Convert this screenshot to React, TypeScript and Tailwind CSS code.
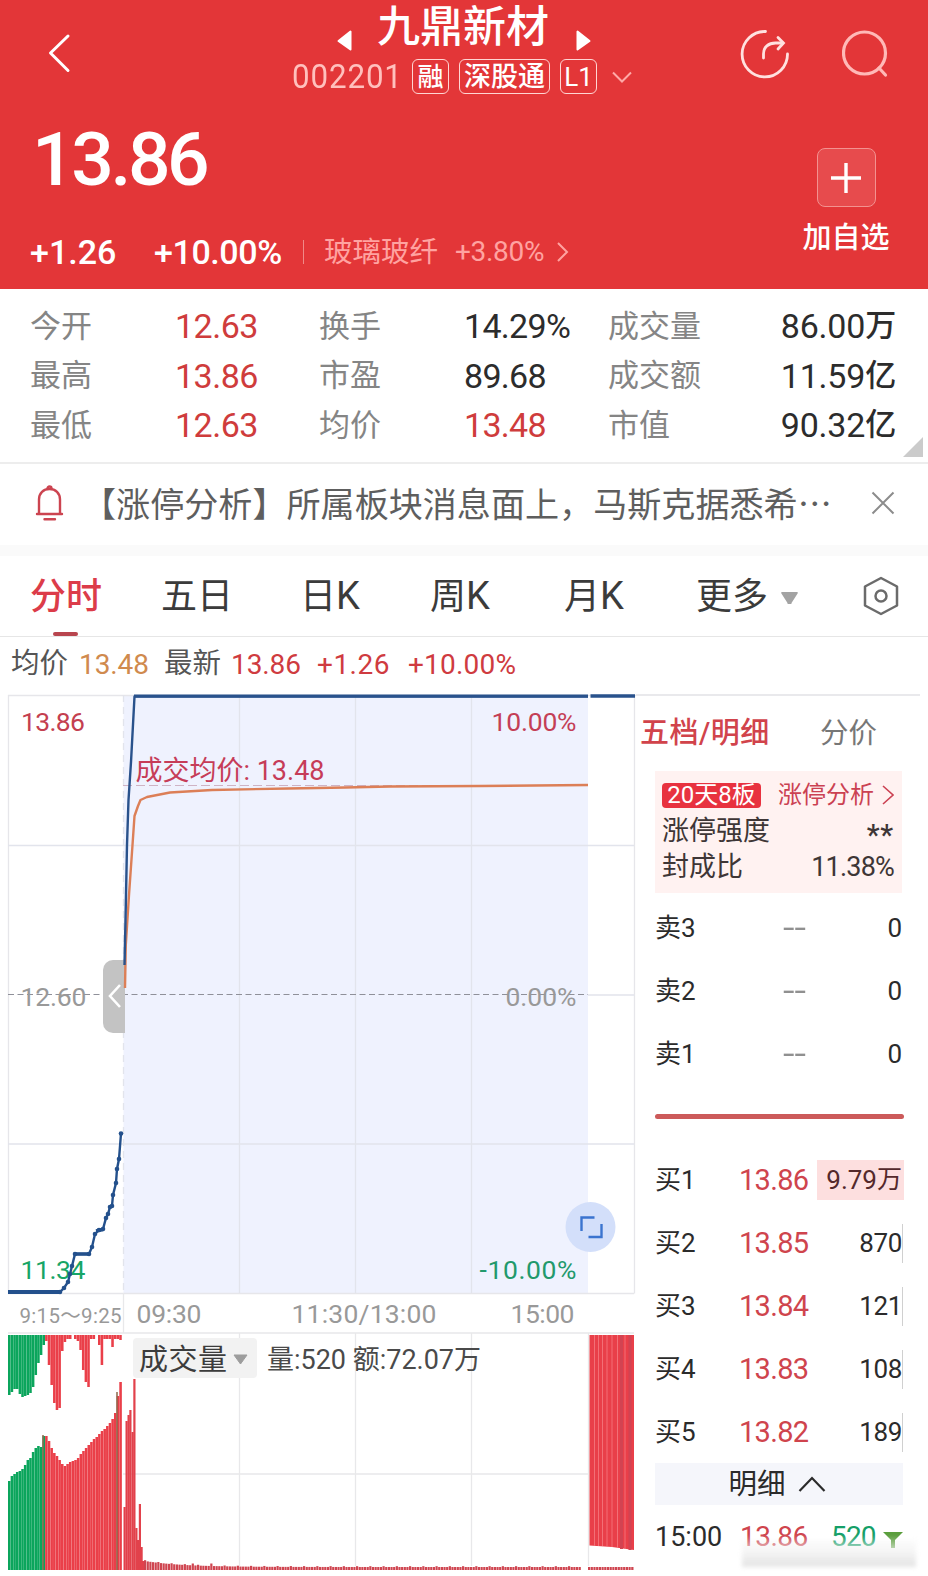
import React from "react";

const FONT = "font-['Roboto','Noto_Sans_CJK_SC',sans-serif]";

const stats = [
  ["今开", "12.63", "", "换手", "14.29%", "成交量", "86.00", "万"],
  ["最高", "13.86", "", "市盈", "89.68", "成交额", "11.59", "亿"],
  ["最低", "12.63", "", "均价", "13.48", "市值", "90.32", "亿"],
];

const sells = ["卖3", "卖2", "卖1"];

const buys = [
  { label: "买1", price: "13.86", volume: "9.79", unit: "万" },
  { label: "买2", price: "13.85", volume: "870" },
  { label: "买3", price: "13.84", volume: "121" },
  { label: "买4", price: "13.83", volume: "108" },
  { label: "买5", price: "13.82", volume: "189" },
];

type Point = [number, number];

// auction matching price, 9:15 - 9:25
const auction: Point[] = [
  [60, 1292], [64, 1288], [68, 1282], [70, 1274], [72, 1266], [75, 1254], [89, 1254], [92, 1247], [95, 1234], [99, 1230],
  [103, 1229], [106, 1218], [108, 1214], [110, 1207], [112, 1206], [113, 1195], [116, 1183], [117, 1169], [119, 1159], [121, 1133.5],
];

// unmatched volume, hangs from the top of the pane
const hanging: Point[] = [
  [8, 1395], [14, 1388], [16, 1389], [20, 1397], [28, 1395], [32, 1387], [34, 1377], [37, 1363], [39, 1358], [42, 1347],
  [43.5, 1339], [45, 1340], [47, 1358], [49, 1376], [51, 1389], [53, 1403], [56, 1411], [58, 1413], [59.5, 1390], [61, 1351],
  [63, 1343], [65, 1339], [70, 1339],
];
const hanging2: Point[] = [
  [74, 1339], [77, 1341], [79, 1348], [81, 1362], [83, 1378], [86, 1386], [88.4, 1387], [89, 1339], [95, 1339],
];
const hanging3: Point[] = [
  [98, 1345], [100, 1364], [102, 1368], [103, 1339], [109, 1339], [111, 1348], [113, 1339], [117, 1339], [121, 1341],
];

const matched: Point[] = [
  [8, 1481], [10, 1477], [16, 1472], [23, 1468], [25, 1462], [30, 1457], [33, 1449], [37, 1446], [40, 1447], [42.7, 1435],
  [44, 1435], [47, 1439], [50, 1447], [53, 1453], [57, 1458], [60, 1462], [63, 1467], [67, 1463], [72, 1461], [77, 1458],
  [82, 1451], [87, 1445], [92, 1440], [97, 1435], [102, 1430], [107, 1425], [110, 1421], [113, 1416], [115.5, 1408],
  [117, 1392], [119, 1386], [121, 1358],
];

const trades: Point[] = [
  [124.5, 1507], [126.5, 1421], [128.5, 1415], [130.3, 1410], [132.5, 1432], [134.3, 1379], [136.3, 1528], [138, 1540],
  [139.8, 1504], [141.5, 1547], [143, 1561],
];

function at(points: Point[], x: number) {
  for (let i = 1; i < points.length; i++) {
    const [x0, y0] = points[i - 1];
    const [x1, y1] = points[i];
    if (x <= x1) return y0 + ((y1 - y0) * (x - x0)) / (x1 - x0);
  }
  return points[points.length - 1][1];
}

function bars(points: Point[], top: boolean) {
  const out = [];
  const start = points[0][0];
  const end = points[points.length - 1][0];
  for (let x = start; x <= end; x += 2.65) {
    const y = Math.round(at(points, x));
    const fill = x < 42.5 ? "#0ba55c" : "#ea3f49";
    out.push(
      <rect key={x} x={x} width={2.55} y={top ? 1335 : y} height={top ? y - 1335 : 1570 - y} fill={fill} />
    );
  }
  return out;
}

function smallBars() {
  const out = [];
  for (let i = 0; i < 165; i++) {
    const x = 144 + i * 2.65;
    const decay = 6 * Math.exp(-i / 14);
    let h = 3 + decay + ((i * 7) % 5 === 0 ? 0.8 : 0);
    if (i === 18 || i === 25) h = 6.5;
    out.push(<rect key={i} x={x} y={1570 - h} width={2.2} height={h} fill="#cf4550" />);
  }
  return out;
}

function Label({ x, y, w, size = 26.5, fill, weight = 400, children }: any) {
  return (
    <text x={x} y={y} textLength={w} lengthAdjust="spacing" fontSize={size} fill={fill} fontWeight={weight}>
      {children}
    </text>
  );
}

function Header() {
  return (
    <header className="h-[289px] bg-[#e33638] text-white">
      <div className="flex h-[105px] items-start">
        <svg className="mt-[32px] ml-[46px]" width="26" height="42" viewBox="0 0 26 42" fill="none" stroke="#fff" strokeWidth="3" strokeLinecap="round" strokeLinejoin="round">
          <path d="M22 4 4.500 21 22 38.500" />
        </svg>
        <div className="ml-[220px] w-[342px]">
          <div className="flex h-[53px] items-start pl-[44px]">
            <svg className="mt-[29px]" width="17" height="23" viewBox="0 0 17 23">
              <path d="M14.500 2.500v18L2.500 12z" fill="#fff" stroke="#fff" strokeWidth="2" strokeLinejoin="round" />
            </svg>
            <h1 className="ml-[24px] pt-px text-[43px] leading-[52px] font-medium whitespace-nowrap">九鼎新材</h1>
            <svg className="mt-[29px] ml-[26px]" width="17" height="23" viewBox="0 0 17 23">
              <path d="M2.500 2.500v18L14.500 12z" fill="#fff" stroke="#fff" strokeWidth="2" strokeLinejoin="round" />
            </svg>
          </div>
          <div className="flex items-center pt-[6px]">
            <span className="w-[120px] text-[33px] leading-[35px] tracking-[0.9px] text-[#ffc0bd]">
              <span className="inline-block origin-left scale-x-95">002201</span>
            </span>
            <span className="flex h-[35px] w-[37px] items-center justify-center rounded-[6px] border-[1.5px] border-[#ffd5d3] text-[26px] leading-none font-medium">融</span>
            <span className="ml-[10px] flex h-[35px] w-[91px] items-center justify-center rounded-[6px] border-[1.5px] border-[#ffd5d3] pt-[2px] text-[27px] leading-none font-medium">深股通</span>
            <span className="ml-[10px] flex h-[35px] w-[37px] items-center justify-center rounded-[6px] border-[1.5px] border-[#ffd5d3] text-[26px] leading-none">L1</span>
            <svg className="ml-[14px]" width="22" height="14" viewBox="0 0 22 14" fill="none" stroke="#ffa9a7" strokeWidth="2">
              <path d="m2 2.500 9 9 9-9" />
            </svg>
          </div>
        </div>
        <svg className="mt-[28px] ml-[105px]" width="52" height="52" viewBox="0 0 52 52" fill="none" stroke="#ffe1df" strokeWidth="2.800" strokeLinecap="round">
          <path d="M26.500 3.500A22.700 22.700 0 1 0 48.500 26" />
          <path d="M24.500 30v-4c0-7 5-11 12-11h7" />
          <path d="m39 9.500 5.500 5.500-5.500 6" />
        </svg>
        <svg className="mt-[28px] ml-[51px]" width="52" height="52" viewBox="0 0 52 52" fill="none" stroke="#ffb9b7" strokeWidth="3.200" strokeLinecap="round">
          <circle cx="22.500" cy="25" r="21" />
          <path d="m37 40 6.500 7" />
        </svg>
      </div>
      <div className="flex h-[184px] justify-between">
        <div className="pl-[32px]">
          <div className="mt-[10px] h-[88px] text-[75px] leading-[88px] font-medium tracking-[-3.4px]">13.86</div>
          <div className="mt-[29px] flex h-[40px] items-center whitespace-nowrap">
            <span className="-ml-[2px] w-[124px] text-[34px] font-medium">+1.26</span>
            <span className="w-[149px] text-[34px] font-medium tracking-[-0.4px]">+10.00%</span>
            <span className="h-[24px] w-px bg-[#f08a88]" />
            <span className="ml-[20px] pt-[2px] text-[28.5px] text-[#ffa3a1]">玻璃玻纤</span>
            <span className="ml-[17px] w-[101px] text-[28px] tracking-[-0.3px] text-[#ffa3a1]">+3.80%</span>
            <svg width="14" height="22" viewBox="0 0 14 22" fill="none" stroke="#ffa3a1" strokeWidth="2">
              <path d="m2 2 9 9-9 9" />
            </svg>
          </div>
        </div>
        <div className="mr-[37px] flex w-[90px] flex-col items-center pt-[43px]">
          <div className="flex h-[59px] w-[59px] items-center justify-center rounded-[8px] border-[1.5px] border-[#f39290] bg-[#e74b4d]">
            <svg width="30" height="30" viewBox="0 0 30 30" stroke="#fff" strokeWidth="3.400">
              <path d="M15 0v30M0 15h30" />
            </svg>
          </div>
          <div className="mt-[12px] text-[29px] leading-[38px] font-medium">加自选</div>
        </div>
      </div>
    </header>
  );
}

function Stats() {
  return (
    <section className="relative h-[175px] border-b-2 border-[#ededed] pt-[12px]">
      {stats.map((s) => (
        <div key={s[0]} className="flex h-[49.700px] items-center text-[31px] whitespace-nowrap">
          <span className="ml-[30px] w-[145px] pt-[2px] text-[#858585]">{s[0]}</span>
          <span className="w-[144px] pt-px text-[34px] font-[450] tracking-[-0.5px] text-[#cf3c3c]">{s[1]}</span>
          <span className="w-[145px] pt-[2px] text-[#858585]">{s[3]}</span>
          <span className={`w-[144px] pt-px text-[34px] font-[450] tracking-[-0.7px] ${s[3] === "均价" ? "text-[#cf3c3c]" : "text-[#2c2c2c]"}`}>{s[4]}</span>
          <span className="pt-[2px] text-[#858585]">{s[5]}</span>
          <span className="mr-[32px] ml-auto flex items-center pt-px text-[34px] font-[450] tracking-[-0.2px] text-[#2c2c2c]">
            {s[6]}
            <span className="text-[31px]">{s[7]}</span>
          </span>
        </div>
      ))}
      <svg className="absolute right-[5px] bottom-[5px]" width="20" height="20">
        <path d="M20 0v20H0z" fill="#cbcbcb" />
      </svg>
    </section>
  );
}

function Notice() {
  return (
    <section className="flex h-[81px] items-center pb-[3px] text-[#5e5e5e]">
      <svg className="ml-[35px]" width="29" height="36" viewBox="0 0 29 36" fill="none" stroke="#cc4450" strokeWidth="2.400" strokeLinecap="round" strokeLinejoin="round">
        <path d="M2 29h25M4 28.500V14.500C4 8 8.500 4 14.500 4S25 8 25 14.500v14" />
        <path d="M12.500 3.500a2 2 0 0 1 4 0M9.500 34.300h10.500" />
      </svg>
      <p className="ml-[18px] w-[770px] text-[34.100px] leading-[40px] whitespace-nowrap">
        【涨停分析】所属板块消息面上，马斯克据悉希<span className="font-['Noto_Sans_CJK_SC']">⋯</span>
      </p>
      <svg className="ml-[19px]" width="24" height="24" viewBox="0 0 24 24" stroke="#8c8c8c" strokeWidth="2">
        <path d="m1.500 1.500 21 21M22.500 1.500l-21 21" />
      </svg>
    </section>
  );
}

function Tabs() {
  return (
    <nav className="relative flex h-[81px] items-center border-b border-[#e6e6e6] text-[36px] whitespace-nowrap text-[#3b3b3b]">
      <span className="ml-[30px] w-[131px] pt-px font-medium text-[#dc3c49]">分时</span>
      <span className="w-[139px] pt-px">五日</span>
      <span className="w-[130px] pt-px">日<span className="text-[38px]">K</span></span>
      <span className="w-[134px] pt-px">周<span className="text-[38px]">K</span></span>
      <span className="w-[132px] pt-px">月<span className="text-[38px]">K</span></span>
      <span className="pt-px">更多</span>
      <svg className="mt-[4px] ml-[13px]" width="17" height="12">
        <path d="M1 0h15a1 1 0 0 1 .6 1.500L10.500 11a2 2 0 0 1-4 0L.4 1.500A1 1 0 0 1 1 0z" fill="#a3a3a3" />
      </svg>
      <svg className="ml-[65px]" width="36" height="40" viewBox="0 0 36 40" fill="none" stroke="#6b6b6b" strokeWidth="2.500" strokeLinejoin="round">
        <path d="M18 2 34 10.500v19L18 38 2 29.500v-19z" />
        <circle cx="18" cy="20" r="5.500" />
      </svg>
      <span className="absolute bottom-0 left-[53px] h-[4px] w-[25px] rounded-full bg-[#b8454e]" />
    </nav>
  );
}

function Summary() {
  return (
    <div className="flex h-[57px] items-center pb-[2px] text-[28px] font-[450] tracking-[-0.1px] whitespace-nowrap text-[#cf3b40]">
      <span className="ml-[11px] w-[68px] text-[28.500px] font-normal tracking-normal text-[#555]">均价</span>
      <span className="w-[85px] font-normal text-[#d08a4e]">13.48</span>
      <span className="w-[67px] text-[28.500px] font-normal tracking-normal text-[#555]">最新</span>
      <span className="w-[86px]">13.86</span>
      <span className="w-[91px] tracking-[0.500px]">+1.26</span>
      <span className="tracking-[0.200px]">+10.00%</span>
    </div>
  );
}

function Chart() {
  return (
    <svg className="shrink-0" width="636" height="882" viewBox="0 694 636 882">
      <rect x="123.500" y="695" width="464.500" height="598" fill="#eff2fe" />
      <g stroke="#e2e4ec" strokeWidth="1.300" fill="none">
        <path d="M8.500 695V1293.500M634.500 695V1293.500M8 695.500H636M8 1293.500H634" stroke="#e6e6ea" />
        <path d="M239.500 695V1293M355.500 695V1293M471.500 695V1293" />
        <path d="M8 845.500H634M8 1144H634M588 995H634" />
        <path d="M123.500 695V1293" strokeDasharray="7 5" />
        <path d="M123.500 1293V1333M8 1333H634M123 1474H588M239.500 1333V1566M355.500 1333V1566M471.500 1333V1566M588.500 1333V1566" stroke="#e8e8ea" />
      </g>
      <path d="M8 994.500H588" stroke="#8f9099" strokeWidth="1.200" strokeDasharray="6 3.500" />
      <path d="M123 785.500H588" stroke="#cfb3c4" strokeWidth="1.200" strokeDasharray="9 4" />

      <Label x={21} y={730.700} w={64} fill="#c43f50">13.86</Label>
      <Label x={491.500} y={730.700} w={85} fill="#c43f56">10.00%</Label>
      <Label x={20.500} y={1005.700} w={66} fill="#999">12.60</Label>
      <Label x={505.500} y={1005.700} w={71} fill="#999">0.00%</Label>
      <Label x={20.500} y={1279} w={65} fill="#18a566">11.34</Label>
      <Label x={479.500} y={1279} w={97} fill="#22996c">-10.00%</Label>

      {/* handle that folds the auction pane */}
      <path d="M125 960H113a10 10 0 0 0-10 10v53a10 10 0 0 0 10 10h12z" fill="#c3c3c3" />
      <path d="m120 985-10 11 10 11" fill="none" stroke="#fff" strokeWidth="2.600" />

      <path d="M125 988 125.800 945 129 895 132.500 845 134.500 816 138 806 140.500 800 147 797 170 792.500 212 790 288 788.500 345 787.500 390 786.500 480 786 588 785" fill="none" stroke="#dc7f57" strokeWidth="2.400" strokeLinejoin="round" />
      <path d="M124.500 965 125.500 920 127 845 128.500 800 131 762 134.500 696.500H588" fill="none" stroke="#29528c" strokeWidth="2.400" strokeLinejoin="round" />
      <path d="M134 696H588" stroke="#29528c" strokeWidth="3" />
      <path d="M590.500 696H635" stroke="#29528c" strokeWidth="3.600" />
      <Label x={135.500} y={780} w={189} size={27} fill="#c63c58">成交均价: 13.48</Label>

      <path d="M8 1292H61" stroke="#23508c" strokeWidth="4" />
      <polyline points={auction.map((p) => p.join(",")).join(" ")} fill="none" stroke="#23508c" strokeWidth="2.400" />
      <path d="M74 1254H90M96 1231 103 1229.500" stroke="#23508c" strokeWidth="3.600" />
      {auction.map(([x, y]) => (
        <circle key={`${x}-${y}`} cx={x} cy={y} r="2.300" fill="#23508c" />
      ))}

      <circle cx="590.500" cy="1227" r="25" fill="#d3dffa" />
      <path d="M594.500 1217.500H581.500V1231M601.500 1224V1237H588.500" fill="none" stroke="#3b74cf" strokeWidth="2.400" />

      <Label x={19.500} y={1322.700} w={102} size={20.500} fill="#999">9:15～9:25</Label>
      <Label x={136.500} y={1322.700} w={65} fill="#999">09:30</Label>
      <Label x={291.500} y={1322.700} w={145} fill="#999">11:30/13:00</Label>
      <Label x={510.500} y={1322.700} w={64} fill="#999">15:00</Label>

      {bars(hanging, true)}
      {bars(hanging2, true)}
      {bars(hanging3, true)}
      {bars(matched, false)}
      <path d="M43 1435V1570M117 1392V1570" stroke="#8d6a4c" strokeWidth="1.500" />
      {trades.map(([x, y]) => (
        <rect key={x} x={x - 1} y={y} width="2.200" height={1570 - y} fill="#e2414b" />
      ))}
      {smallBars()}
      <path d="M588 1568.500H634" stroke="#cf4550" strokeWidth="3" strokeDasharray="2.200 .5" />
      <path d="M589.500 1335H634V1550L612 1547 589.500 1545.500z" fill="#e93f49" />
      <path d="M594.500 1335V1546M598.500 1335V1546M602.500 1335V1546M607 1335V1546M612 1335V1547M617.500 1335V1548M625 1335V1549" stroke="#f4757c" strokeWidth=".9" />
      <path d="M621.500 1335V1549M630 1335V1550" stroke="#d24352" strokeWidth="3" />

      <rect x="133" y="1338" width="124" height="40" rx="4" fill="#f2f2f2" />
      <Label x={139} y={1369.500} w={88} size={29} fill="#3c3c3c">成交量</Label>
      <path d="M234 1355h13l-6.500 9z" fill="#9d9d9d" stroke="#9d9d9d" strokeLinejoin="round" />
      <Label x={267} y={1368.500} w={214} size={27} fill="#4a4a4a">量:520 额:72.07万</Label>
    </svg>
  );
}

function OrderBook() {
  return (
    <aside className="flex w-[284px] flex-col border-t-2 border-[#e9e9ec] text-[#2b2b2b]">
      <div className="flex h-[75px] items-center pt-px pl-[4px] text-[29px] whitespace-nowrap">
        <span className="w-[180px] font-medium tracking-[0.500px] text-[#d1434b]">五档/明细</span>
        <span className="text-[28.500px] text-[#777]">分价</span>
      </div>
      <div className="ml-[19px] h-[122px] w-[247px] bg-[#fff2f1] pt-[6px] pr-[8px] pl-[7px] text-[27px] text-[#3e3636]">
        <div className="flex h-[36px] items-center text-[24px] whitespace-nowrap">
          <span className="flex h-[25px] w-[99px] items-center justify-center rounded-[4px] bg-[#e8323f] leading-none text-white">20天8板</span>
          <span className="ml-[17px] text-[#cb4152]">涨停分析</span>
          <svg className="ml-auto" width="12" height="20" viewBox="0 0 12 20" fill="none" stroke="#cb4152" strokeWidth="1.600">
            <path d="m1 1 10 9-10 9" />
          </svg>
        </div>
        <div className="flex h-[36px] items-center justify-between pt-px">
          <span>涨停强度</span>
          <span className="pt-[8px] text-[29px] font-medium tracking-[0.800px]">**</span>
        </div>
        <div className="flex h-[36px] items-center justify-between">
          <span>封成比</span>
          <span className="pt-px tracking-[-0.800px]">11.38%</span>
        </div>
      </div>
      <div className="mt-[3px] ml-[19px] w-[247px] text-[26px]">
        {sells.map((label) => (
          <div key={label} className="flex h-[63px] items-center pt-[2px]">
            <span className="w-[128px]">{label}</span>
            <span className="mb-[4px] origin-left scale-x-130 text-[32px] leading-none text-[#909090]">--</span>
            <span className="ml-auto">0</span>
          </div>
        ))}
        <div className="flex h-[63px] items-center">
          <div className="h-[5px] w-[249px] shrink-0 rounded-full bg-[#cc5a5a]" />
        </div>
        {buys.map((b) => (
          <div key={b.label} className="flex h-[63px] items-center pt-px whitespace-nowrap">
            <span className="w-[84px] pt-px">{b.label}</span>
            <span className="w-[77px] pt-px text-[29px] font-[450] tracking-[-0.700px] text-[#cf444d]">{b.price}</span>
            {b.unit ? (
              <span className="-mr-[2px] ml-auto flex h-[40px] w-[87px] shrink-0 items-center justify-end bg-[#fddfdf] pr-[2px] text-[#54292b]">
                {b.volume}
                <span className="text-[25px]">{b.unit}</span>
              </span>
            ) : (
              <span className="-mr-[1px] ml-auto flex h-[39px] items-center border-r border-[#d0d0d0] tracking-[-0.400px]">{b.volume}</span>
            )}
          </div>
        ))}
      </div>
      <div className="ml-[19px] flex h-[42px] w-[248px] items-center justify-center bg-[#f5f6fb] pr-[4px] text-[28.500px]">
        <span className="pt-[2px]">明细</span>
        <svg className="ml-[12px]" width="28" height="18" viewBox="0 0 28 18" fill="none" stroke="#2b2b2b" strokeWidth="2.200">
          <path d="M1.500 16 14 3l12.500 13" />
        </svg>
      </div>
      <div className="relative ml-[19px] flex h-[64px] w-[264px] items-center whitespace-nowrap">
        <span className="w-[85px] text-[27px]">15:00</span>
        <span className="w-[91px] text-[28px] tracking-[-0.500px] text-[#cf444d]">13.86</span>
        <span className="text-[28px] tracking-[-0.800px] text-[#159f68]">520</span>
        <svg className="ml-[7px]" width="20" height="22">
          <path d="M0 6h20l-8 8v8H8v-8z" fill="#5a9e3c" />
        </svg>
        <div className="absolute top-[32px] left-[87px] h-[30px] w-[174px] bg-gradient-to-b from-white/10 via-[#f2f2f2]/80 to-[#e2e2e2]/95 blur-[2px]" />
      </div>
    </aside>
  );
}

export default function App() {
  return (
    <div className={`flex h-[1576px] w-[928px] flex-col overflow-hidden bg-white ${FONT}`}>
      <Header />
      <Stats />
      <Notice />
      <div className="h-[11px] bg-[#fafafa]" />
      <Tabs />
      <Summary />
      <main className="flex h-[882px]">
        <Chart />
        <OrderBook />
      </main>
    </div>
  );
}
